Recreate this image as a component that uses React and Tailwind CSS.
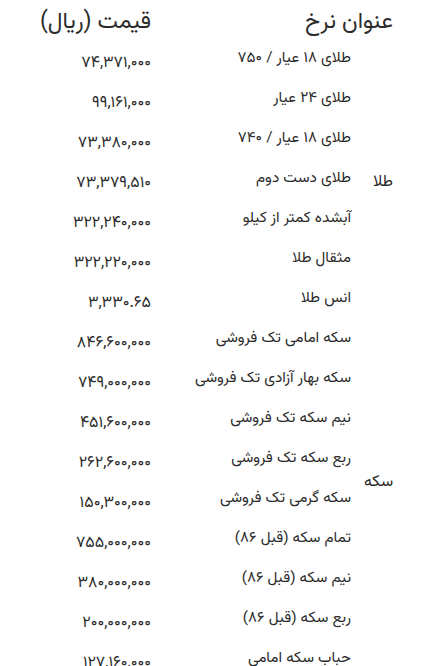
import React from "react";

const groups = [
	{
		title: "طلا",
		rows: [
			["طلای ۱۸ عیار / ۷۵۰", "۷۴,۳۷۱,۰۰۰"],
			["طلای ۲۴ عیار", "۹۹,۱۶۱,۰۰۰"],
			["طلای ۱۸ عیار / ۷۴۰", "۷۳,۳۸۰,۰۰۰"],
			["طلای دست دوم", "۷۳,۳۷۹,۵۱۰"],
			["آبشده کمتر از کیلو", "۳۲۲,۲۴۰,۰۰۰"],
			["مثقال طلا", "۳۲۲,۲۲۰,۰۰۰"],
			["انس طلا", "۳,۳۳۰.۶۵"],
		],
	},
	{
		title: "سکه",
		rows: [
			["سکه امامی تک فروشی", "۸۴۶,۶۰۰,۰۰۰"],
			["سکه بهار آزادی تک فروشی", "۷۴۹,۰۰۰,۰۰۰"],
			["نیم سکه تک فروشی", "۴۵۱,۶۰۰,۰۰۰"],
			["ربع سکه تک فروشی", "۲۶۲,۶۰۰,۰۰۰"],
			["سکه گرمی تک فروشی", "۱۵۰,۳۰۰,۰۰۰"],
			["تمام سکه (قبل ۸۶)", "۷۵۵,۰۰۰,۰۰۰"],
			["نیم سکه (قبل ۸۶)", "۳۸۰,۰۰۰,۰۰۰"],
			["ربع سکه (قبل ۸۶)", "۲۰۰,۰۰۰,۰۰۰"],
		],
	},
	{
		title: "حباب",
		rows: [
			["حباب سکه امامی", "۱۲۷,۱۶۰,۰۰۰"],
			["حباب سکه بهار آزادی", "۹۸,۳۰۰,۰۰۰"],
			["حباب نیم سکه", "۷۲,۴۰۰,۰۰۰"],
		],
	},
];

export default function App() {
	return (
		<div dir="rtl" className="h-[666px] w-[422px] overflow-hidden bg-white font-[Vazirmatn,sans-serif] text-[#2b2b2b]">
			<table className="w-full border-collapse">
				<thead>
					<tr className="h-[40px]">
						<th colSpan={2} className="pr-[29px] pt-[4px] text-right align-middle text-[23px] font-normal leading-none">
							عنوان نرخ
						</th>
						<th className="pt-[4px] text-right align-middle text-[23px] font-normal leading-none">قیمت (ریال)</th>
					</tr>
				</thead>
				<tbody>
					{groups.map((g) =>
						g.rows.map((r, i) => (
							<tr key={g.title + i} className="h-[40px]">
								{i === 0 && (
									<td
										rowSpan={g.rows.length}
										className="w-[71px] pr-[29px] pt-[6px] text-right align-middle text-[16px]"
									>
										{g.title}
									</td>
								)}
								<td className="w-[200px] pt-[6px] text-right align-top text-[15.3px] leading-[24px]">{r[0]}</td>
								<td className="pt-[13px] text-right align-top text-[16px] leading-[22px]">{r[1]}</td>
							</tr>
						)),
					)}
				</tbody>
			</table>
		</div>
	);
}
